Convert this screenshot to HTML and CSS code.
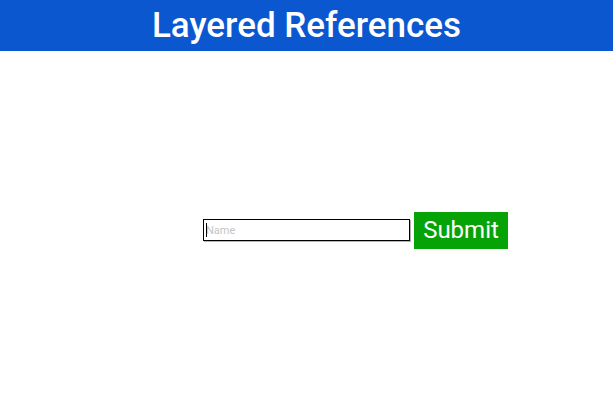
FILE: index.html
```html
<!DOCTYPE html>
<html>
<head>
<meta charset="utf-8">
<link rel="stylesheet" href="styles.css">
</head>
<body>
<header class="top-bar">
  <h1 class="title">Layered References</h1>
</header>
<main class="stage">
  <form class="name-form">
    <span class="field">
      <input class="name-input" type="text" placeholder="Name">
    </span>
    <button class="submit-btn" type="button">Submit</button>
  </form>
</main>
</body>
</html>
```
FILE: styles.css
```css
html, body {
  margin: 0;
  padding: 0;
  height: 100%;
  background: #ffffff;
  font-family: Roboto, "Liberation Sans", sans-serif;
}
body {
  display: flex;
  flex-direction: column;
}
.top-bar {
  height: 51px;
  background: #0b57d0;
  display: flex;
  align-items: center;
  justify-content: center;
  flex-shrink: 0;
}
.title {
  margin: 0;
  color: #ffffff;
  font-size: 35px;
  font-weight: 500;
  line-height: 1;
  padding-top: 0;
}
.stage {
  flex: 1;
  display: flex;
  align-items: center;
  padding-left: 203px;
}
.name-form {
  display: flex;
  align-items: center;
  gap: 4px;
  margin: 0;
}
.field {
  position: relative;
  display: block;
}
.field::before {
  content: "";
  position: absolute;
  left: 3px;
  top: 4px;
  width: 1px;
  height: 14px;
  background: #000;
}
.name-input {
  display: block;
  box-sizing: border-box;
  width: 207px;
  height: 22px;
  margin: 0;
  border: 1px solid #000;
  box-shadow: 1px 1px 0 #b4b4b4;
  padding: 0 2px;
  font-family: Roboto, "Liberation Sans", sans-serif;
  font-size: 11px;
  outline: none;
  background: #fff;
}
.name-input::placeholder {
  color: #c4c4c4;
}
.submit-btn {
  box-sizing: border-box;
  height: 37px;
  width: 94px;
  padding: 0;
  border: none;
  background: #06a306;
  color: #ffffff;
  font-family: Roboto, "Liberation Sans", sans-serif;
  font-size: 24px;
  line-height: 1;
}
```
